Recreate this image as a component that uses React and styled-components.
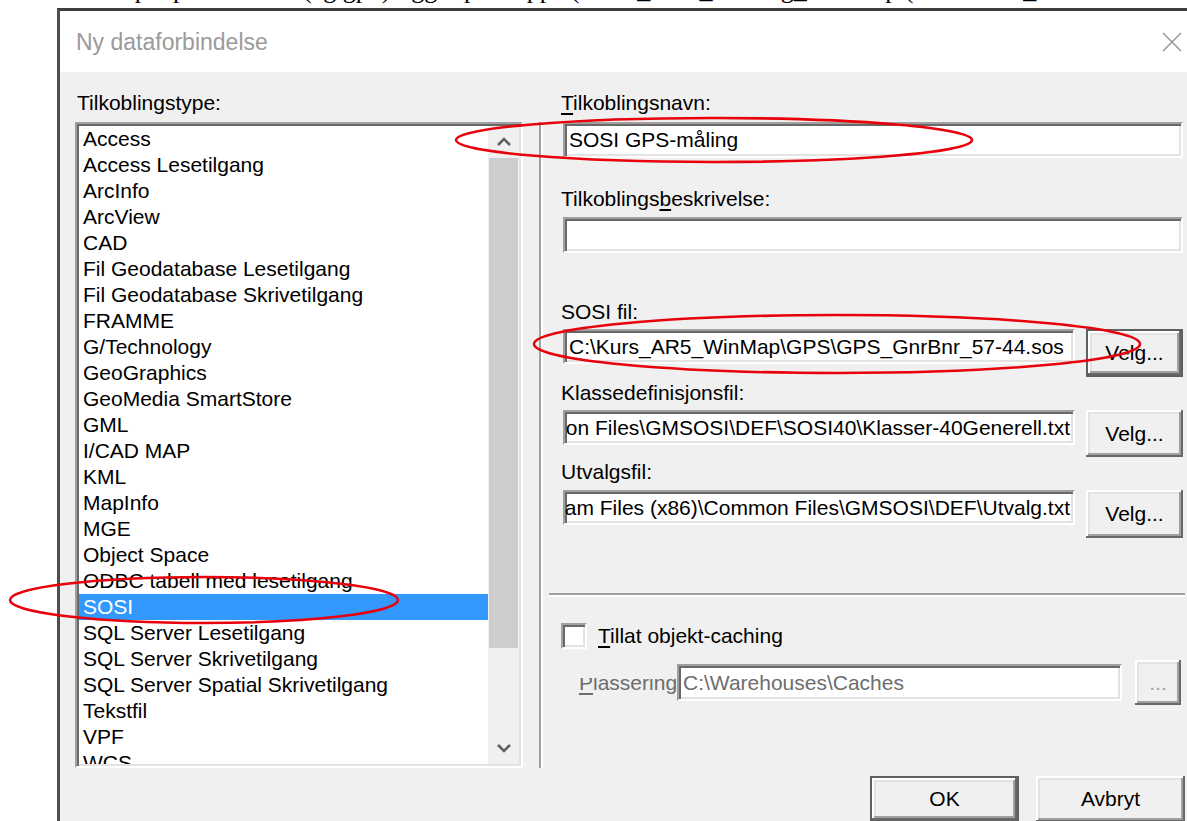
import React from 'react';
import styled, { createGlobalStyle } from 'styled-components';

const GlobalStyle = createGlobalStyle`
  * { box-sizing: border-box; }
  html, body { margin: 0; padding: 0; background: #fff; overflow: hidden; }
  body { font-family: "Liberation Sans", Arial, sans-serif; }
`;

const connectionTypes = [
  'Access', 'Access Lesetilgang', 'ArcInfo', 'ArcView', 'CAD',
  'Fil Geodatabase Lesetilgang', 'Fil Geodatabase Skrivetilgang', 'FRAMME',
  'G/Technology', 'GeoGraphics', 'GeoMedia SmartStore', 'GML', 'I/CAD MAP',
  'KML', 'MapInfo', 'MGE', 'Object Space', 'ODBC tabell med lesetilgang',
  'SOSI', 'SQL Server Lesetilgang', 'SQL Server Skrivetilgang',
  'SQL Server Spatial Skrivetilgang', 'Tekstfil', 'VPF', 'WCS', 'WFS', 'WMS',
];

const Page = styled.div`
  position: relative;
  width: 1187px;
  height: 821px;
  overflow: hidden;
  background: #fff;
`;

/* document line behind the dialog, only its descenders peek out */
const DocLine = styled.div`
  height: 8px;
  overflow: hidden;
  display: flex;
  align-items: flex-end;
  padding-left: 64px;
`;

const DocText = styled.span`
  font-family: "Liberation Serif", "Times New Roman", serif;
  font-size: 26px;
  line-height: 26px;
  padding-bottom: 5px;
  white-space: nowrap;
  color: #000;
`;

const Dialog = styled.div`
  margin-left: 57px;
  width: 1150px;
  height: 813px;
  border-left: 3px solid #4e4e4e;
  border-top: 3px solid #3e3e3e;
  background: #f0f0f0;
  display: flex;
  flex-direction: column;
`;

const TitleBar = styled.div`
  height: 61px;
  flex-shrink: 0;
  background: #fff;
  display: flex;
  align-items: center;
  justify-content: space-between;
  padding: 0 25px 0 16px;
`;

const Title = styled.span`
  font-family: "Liberation Sans", Arial, sans-serif;
  font-size: 23px;
  color: #9a9a9a;
  margin-top: 2px;
`;

const Client = styled.div`
  flex: 1;
  display: grid;
  grid-template-columns: 448px 26px 636px;
  align-items: start;
  padding: 19px 0 0 15px;
`;

const Column = styled.div`
  display: flex;
  flex-direction: column;
`;

const FieldLabel = styled.div`
  height: 24px;
  line-height: 24px;
  font-size: 21px;
  color: #000;
  white-space: nowrap;
  padding-left: ${(p) => p.$indent || 0}px;
  margin-top: ${(p) => p.$gap || 0}px;
`;

const Accel = styled.span`
  text-decoration: underline;
  text-underline-offset: 3px;
`;

const ListBox = styled.div`
  margin-top: 7px;
  height: 646px;
  display: flex;
  padding: 2px;
  background: #fff;
  border: 2px solid;
  border-color: #a0a0a0 #fff #fff #a0a0a0;
  box-shadow: inset 2px 2px 0 #696969, inset -2px -2px 0 #e3e3e3;
`;

const ListItems = styled.div`
  flex: 1;
  overflow: hidden;
`;

const ListRow = styled.div`
  height: 26px;
  line-height: 26px;
  font-size: 21px;
  padding-left: 4px;
  white-space: nowrap;
  color: ${(p) => (p.$selected ? '#fff' : '#000')};
  background: ${(p) => (p.$selected ? '#3399ff' : 'transparent')};
`;

const ScrollBar = styled.div`
  width: 31px;
  display: flex;
  flex-direction: column;
  background: #f0f0f0;
`;

const ScrollArrow = styled.div`
  height: 32px;
  display: flex;
  align-items: center;
  justify-content: center;
`;

const ScrollThumb = styled.div`
  height: 490px;
  margin: 0 1px;
  background: #cdcdcd;
`;

const ScrollTrack = styled.div`
  flex: 1;
`;

const VerticalRule = styled.div`
  margin: 31px 0 0 16px;
  width: 4px;
  height: 646px;
  border-left: 2px solid #a0a0a0;
  border-right: 2px solid #fff;
`;

const Fields = styled.div`
  display: flex;
  flex-direction: column;
  padding: 0 2px 0 12px;
`;

const TextBox = styled.div`
  flex: none;
  height: ${(p) => p.$h || 36}px;
  min-width: 0;
  margin-left: 2px;
  margin-top: ${(p) => p.$gap || 0}px;
  background: #fff;
  border: 2px solid;
  border-color: #a0a0a0 #fff #fff #a0a0a0;
  box-shadow: inset 2px 2px 0 #696969, inset -2px -2px 0 #e3e3e3;
  padding: 0 3px 0 4px;
  display: flex;
  align-items: center;
  justify-content: ${(p) => (p.$end ? 'flex-end' : 'flex-start')};
  overflow: hidden;
  font-size: 21px;
  white-space: nowrap;
  color: ${(p) => (p.$disabled ? '#6d6d6d' : '#000')};
`;

/* text box that shares its row with a browse button */
const RowBox = styled(TextBox)`
  flex: 1 1 0;
`;

const FieldRow = styled.div`
  display: flex;
  align-items: flex-start;
  gap: 11px;
  height: ${(p) => p.$h}px;
  margin-top: ${(p) => p.$gap || 0}px;
`;

const Button = styled.button`
  flex-shrink: 0;
  width: ${(p) => p.$w}px;
  height: ${(p) => p.$h}px;
  padding: 0;
  background: #f0f0f0;
  font-family: "Liberation Sans", Arial, sans-serif;
  font-size: 21px;
  color: ${(p) => (p.disabled ? '#a0a0a0' : '#000')};
  border: ${(p) => (p.$isDefault ? '2px solid #5f5f5f' : 'none')};
  box-shadow: inset -2px -2px 0 #696969, inset 2px 2px 0 #fff,
    inset -4px -4px 0 #a0a0a0, inset 4px 4px 0 #e3e3e3;
`;

const Divider = styled.div`
  margin-top: 55px;
  height: 4px;
  border-top: 2px solid #a0a0a0;
  border-bottom: 2px solid #fff;
`;

const Options = styled.div`
  display: flex;
  flex-direction: column;
  padding: 0 2px 0 12px;
`;

const CheckRow = styled.label`
  display: flex;
  align-items: center;
  gap: 11px;
  height: 26px;
  margin-top: 26px;
  font-size: 21px;
  color: #000;
`;

const CheckBox = styled.span`
  width: 26px;
  height: 26px;
  background: #fff;
  border: 2px solid;
  border-color: #a0a0a0 #fff #fff #a0a0a0;
  box-shadow: inset 2px 2px 0 #696969, inset -2px -2px 0 #e3e3e3;
`;

const PathRow = styled.div`
  display: flex;
  align-items: center;
  height: 45px;
  margin-top: 11px;
  padding-left: 18px;
`;

/* the label control is a little too short, so the tops of its letters are cut */
const PathLabel = styled.div`
  width: 98px;
  height: 20px;
  margin-top: 11px;
  overflow: hidden;
  display: flex;
  align-items: flex-end;
  font-size: 21px;
  color: #6d6d6d;
  white-space: nowrap;

  & > span {
    line-height: 24px;
    padding-bottom: 3px;
  }
`;

const PathBox = styled(TextBox)`
  width: 445px;
  margin-left: 0;
  margin-right: 13px;
`;

const ButtonRow = styled.div`
  display: flex;
  justify-content: flex-end;
  gap: 17px;
  margin-top: 71px;
`;

const Annotations = styled.svg`
  position: absolute;
  left: 0;
  top: 0;
  pointer-events: none;
`;

const Chevron = ({ up }) => (
  <svg width="16" height="10" viewBox="0 0 16 10">
    <polyline
      points={up ? '2,8 8,2 14,8' : '2,2 8,8 14,2'}
      fill="none"
      stroke="#606060"
      strokeWidth="2.6"
    />
  </svg>
);

const CloseIcon = () => (
  <svg width="20" height="20" viewBox="0 0 20 20">
    <path d="M1 1 L19 19 M19 1 L1 19" stroke="#9a9a9a" strokeWidth="1.6" />
  </svg>
);

const FileField = ({ value, end, isDefault, h, gap }) => (
  <FieldRow $h={h} $gap={gap}>
    <RowBox $h={35} $end={end}>
      <span>{value}</span>
    </RowBox>
    <Button $w={97} $h={h} $isDefault={isDefault}>Velg...</Button>
  </FieldRow>
);

export default function App() {
  return (
    <Page>
      <GlobalStyle />
      <DocLine>
        <DocText>
          Eksempel på filformat (eg gpx) ligger på mappe (\Kurs_AR5_Trening_WinMap (\GPS\GPS_GnrBnr
        </DocText>
      </DocLine>
      <Dialog>
        <TitleBar>
          <Title>Ny dataforbindelse</Title>
          <CloseIcon />
        </TitleBar>
        <Client>
          <Column>
            <FieldLabel $indent={2}>Tilkoblingstype:</FieldLabel>
            <ListBox>
              <ListItems>
                {connectionTypes.map((name) => (
                  <ListRow key={name} $selected={name === 'SOSI'}>
                    {name}
                  </ListRow>
                ))}
              </ListItems>
              <ScrollBar>
                <ScrollArrow>
                  <Chevron up />
                </ScrollArrow>
                <ScrollThumb />
                <ScrollTrack />
                <ScrollArrow>
                  <Chevron />
                </ScrollArrow>
              </ScrollBar>
            </ListBox>
          </Column>

          <VerticalRule />

          <Column>
            <Fields>
              <FieldLabel>
                <Accel>T</Accel>ilkoblingsnavn:
              </FieldLabel>
              <TextBox $gap={7}>SOSI GPS-måling</TextBox>
              <FieldLabel $gap={29}>
                Tilkoblings<Accel>b</Accel>eskrivelse:
              </FieldLabel>
              <TextBox $gap={6} />
              <FieldLabel $gap={47}>SOSI fil:</FieldLabel>
              <FileField
                h={48}
                gap={5}
                isDefault
                value="C:\Kurs_AR5_WinMap\GPS\GPS_GnrBnr_57-44.sos"
              />
              <FieldLabel $gap={4}>Klassedefinisjonsfil:</FieldLabel>
              <FileField
                h={47}
                gap={5}
                end
                value="C:\Program Files (x86)\Common Files\GMSOSI\DEF\SOSI40\Klasser-40Generell.txt"
              />
              <FieldLabel $gap={3}>Utvalgsfil:</FieldLabel>
              <FileField
                h={48}
                gap={6}
                end
                value="C:\Program Files (x86)\Common Files\GMSOSI\DEF\Utvalg.txt"
              />
            </Fields>

            <Divider />

            <Options>
              <CheckRow>
                <CheckBox />
                <span>
                  <Accel>T</Accel>illat objekt-caching
                </span>
              </CheckRow>
              <PathRow>
                <PathLabel>
                  <span>
                    <Accel>P</Accel>lassering
                  </span>
                </PathLabel>
                <PathBox $h={37} $disabled>
                  C:\Warehouses\Caches
                </PathBox>
                <Button $w={46} $h={45} disabled>
                  ...
                </Button>
              </PathRow>
            </Options>

            <ButtonRow>
              <Button $w={149} $h={46} $isDefault>OK</Button>
              <Button $w={149} $h={46}>Avbryt</Button>
            </ButtonRow>
          </Column>
        </Client>
      </Dialog>

      <Annotations width="1187" height="821" viewBox="0 0 1187 821">
        <ellipse cx="714" cy="140" rx="258" ry="22" fill="none" stroke="#e8000b" strokeWidth="2.6" />
        <ellipse cx="837" cy="344" rx="303" ry="29" fill="none" stroke="#e8000b" strokeWidth="2.6" />
        <ellipse cx="204" cy="600" rx="194" ry="23" fill="none" stroke="#e8000b" strokeWidth="2.6" />
      </Annotations>
    </Page>
  );
}
